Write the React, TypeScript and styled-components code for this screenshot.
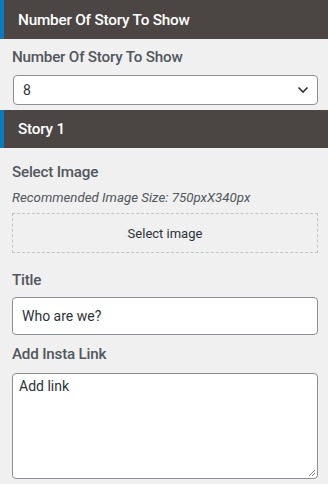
import React from "react";
import styled, { createGlobalStyle } from "styled-components";

const Global = createGlobalStyle`
  html, body { margin: 0; padding: 0; background: #f0f0f0; }
  body { font-family: Roboto, "Noto Sans", sans-serif; }
  * { box-sizing: border-box; }
`;

const Panel = styled.div`
  width: 328px;
  height: 484px;
  overflow: hidden;
  background: #f0f0f0;
  display: flex;
  flex-direction: column;
`;

const SectionHeader = styled.div<{ $h: number }>`
  height: ${(p) => p.$h}px;
  flex: none;
  background: #4b4644;
  border-left: 4px solid #0a7bbf;
  color: #ffffff;
  font-size: 15.3px;
  font-weight: 500;
  display: flex;
  align-items: center;
  padding-left: 14px;
  letter-spacing: -0.2px;
`;

const Body = styled.div`
  padding: 0 10px 0 12px;
  display: flex;
  flex-direction: column;
`;

const Spacer = styled.div`
  height: 5px;
  flex: none;
`;

const Label = styled.div<{ $top: number }>`
  margin-top: ${(p) => p.$top}px;
  color: #50575e;
  font-size: 15.2px;
  font-weight: 500;
  line-height: 18px;
  letter-spacing: -0.2px;
`;

const SelectBox = styled.div`
  margin-top: 9px;
  height: 30px;
  margin-left: 1px;
  background: #fff;
  border: 1px solid #8c8f94;
  border-radius: 4px;
  display: flex;
  align-items: center;
  justify-content: space-between;
  padding: 0 8px 0 9px;
  color: #2c3338;
  font-size: 14px;
`;

const Hint = styled.div`
  margin-top: 9px;
  font-style: italic;
  font-size: 13.3px;
  color: #50575e;
  line-height: 16px;
`;

const DropZone = styled.div`
  margin-top: 7px;
  height: 40px;
  border: 1px dashed #c3c4c7;
  display: flex;
  align-items: center;
  justify-content: center;
  font-size: 13px;
  color: #2c3338;
`;

const TextInput = styled.div`
  margin-top: 8px;
  height: 38px;
  background: #fff;
  border: 1px solid #8c8f94;
  border-radius: 4px;
  display: flex;
  align-items: center;
  padding-left: 9px;
  font-size: 14px;
  color: #2c3338;
`;

const TextArea = styled.div`
  position: relative;
  margin-top: 10px;
  height: 106px;
  background: #fff;
  border: 1px solid #8c8f94;
  border-radius: 4px;
  padding: 3px 6px;
  font-size: 14px;
  color: #2c3338;
  line-height: 18px;
`;

const Grip = styled.svg`
  position: absolute;
  right: 1px;
  bottom: 1px;
`;

export default function App() {
  return (
    <>
      <Global />
      <Panel>
        <SectionHeader $h={39}>Number Of Story To Show</SectionHeader>
        <Body>
          <Label $top={9}>Number Of Story To Show</Label>
          <SelectBox>
            <span>8</span>
            <svg width="12" height="8" viewBox="0 0 12 8">
              <path d="M1.5 1.5 L6 6 L10.5 1.5" fill="none" stroke="#2c3338" strokeWidth="1.6" />
            </svg>
          </SelectBox>
        </Body>
        <Spacer />
        <SectionHeader $h={38}>Story 1</SectionHeader>
        <Body>
          <Label $top={15}>Select Image</Label>
          <Hint>Recommended Image Size: 750pxX340px</Hint>
          <DropZone>Select image</DropZone>
          <Label $top={18}>Title</Label>
          <TextInput>Who are we?</TextInput>
          <Label $top={10}>Add Insta Link</Label>
          <TextArea>
            Add link
            <Grip width="8" height="8" viewBox="0 0 8 8">
              <path d="M7 1 L1 7 M7 4 L4 7" stroke="#888" strokeWidth="1" />
            </Grip>
          </TextArea>
        </Body>
      </Panel>
    </>
  );
}
